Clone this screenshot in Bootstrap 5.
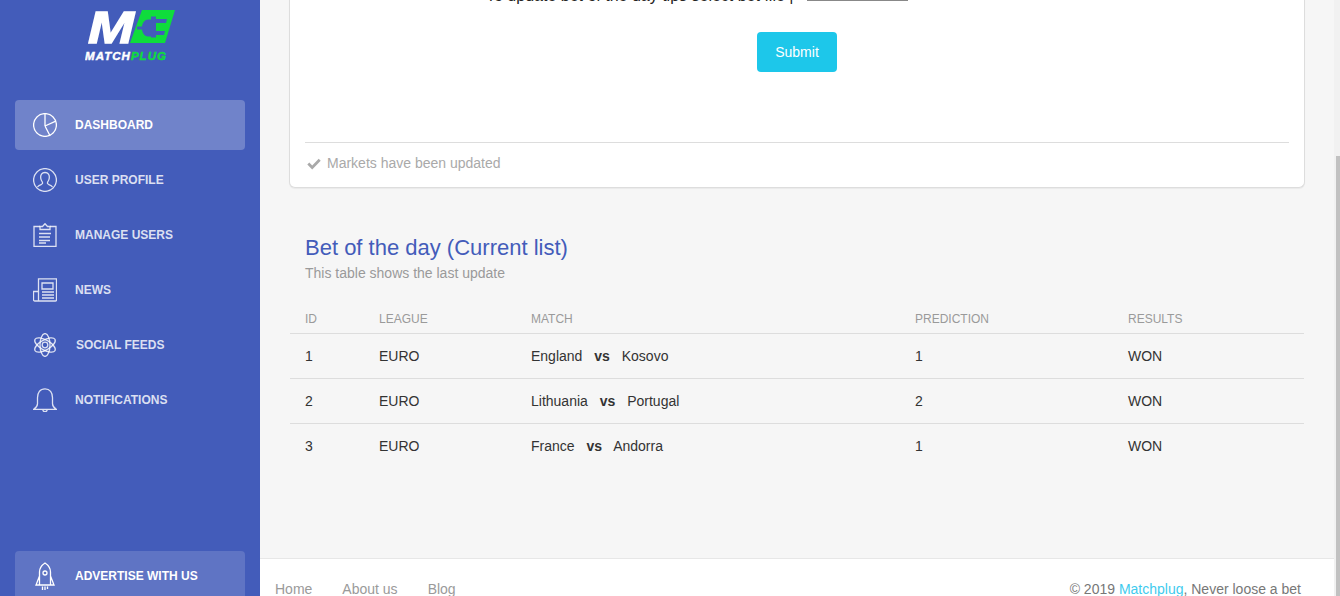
<!DOCTYPE html>
<html lang="en">
<head>
<meta charset="utf-8">
<title>Matchplug</title>
<link rel="stylesheet" href="https://cdn.jsdelivr.net/npm/bootstrap@5.3.0/dist/css/bootstrap.min.css">
<style>
html,body{height:100%;overflow:hidden}
body{font-family:"Liberation Sans",Arial,sans-serif;font-size:14px;background:#f6f6f6;color:#333}
.shell{height:596px;overflow:hidden}
.side{width:260px;flex:0 0 260px;background:#435cba;height:596px;overflow:hidden}
.brand{height:100px;padding-top:10px}
.brand svg{display:block;margin-left:85px}
.side-link{height:50px;margin:0 15px 5px;padding-left:18px;border-radius:4px;color:rgba(255,255,255,.82);font-size:12px;font-weight:700;text-transform:uppercase;text-decoration:none}
.side-link svg{width:24px;height:24px;flex:0 0 24px;margin-right:18px;fill:none;stroke:currentColor;stroke-width:1.3}
.side-link.on{background:rgba(255,255,255,.24);color:#fff}
.side-link.promo{background:rgba(255,255,255,.15);color:#fff;margin-bottom:-5px}
.side-link.promo svg{height:30px}
.side-link.nudge span{margin-left:1px}
.mainwrap{width:1074px;flex:0 0 1074px;height:596px;overflow:hidden}
.body-area{height:558px;overflow:hidden;padding:0 29px}
.formcard{height:197px;margin-top:-9px;margin-bottom:47px;background:#fff;border:1px solid #ddd;border-top:0;border-radius:0 0 6px 6px;padding:0 15px;box-shadow:0 1px 1px rgba(0,0,0,.05)}
.toprow{height:9px;line-height:0;padding-left:181px;color:#252422;white-space:nowrap;font-size:16px;align-items:flex-end}
.toprow span{position:relative;top:-4px}
.file-line{width:101px;height:1px;border-bottom:2px solid #888;margin-left:14px;margin-bottom:-1px}
.go-btn{width:80px;height:40px;margin-top:32px;padding:0;background:#1dc7ea;border:0;color:#fff;font-size:14px;border-radius:4px}
.sepline{margin:70px 0 0;border:0;border-top:1px solid #ddd;opacity:1}
.statusline{color:#a9a9a9;margin-top:12px;line-height:17px;padding-left:2px}
.statusline svg{width:14px;height:12px;margin-right:6px;fill:#a9a9a9}
.tblhead{padding:0 16px;margin-bottom:24px}
.tblhead h4{font-size:22px;font-weight:400;color:#435cba;line-height:25px;margin:0 0 5px}
.tblhead p{color:#9a9a9a;margin:0;line-height:16px}
.bets{width:1014px;margin:0 0 0 1px;--bs-table-bg:transparent;--bs-table-color:#333;table-layout:fixed}
.bets th{font-size:12px;font-weight:400;color:#9a9a9a;text-transform:uppercase;height:28px;padding:0 0 0 15px;border-bottom:1px solid #ddd;vertical-align:middle}
.bets td{height:45px;padding:1px 0 0 15px;border-bottom:1px solid #ddd;vertical-align:middle;font-size:14px;color:#333}
.bets tbody tr:last-child td{border-bottom:0}
.c1{width:74px}.c2{width:152px}.c3{width:384px}.c4{width:213px}
.foot{height:38px;background:#fff;border-top:1px solid #e7e7e7;padding:20px 33px 0 15px;line-height:20px;overflow:visible}
.foot a{color:#9a9a9a;text-decoration:none;margin-right:30px}
.foot .copy{color:#777}
.foot .copy a{color:#3fcbee;margin:0}
.sbar{width:6px;flex:0 0 6px;height:596px;background:#f1f1f1}
.sbar i{display:block;margin:156px 0 0 2px;width:4px;height:440px;background:#c1c1c1}
</style>
</head>
<body>
<div class="shell d-flex">
  <aside class="side d-flex flex-column">
    <div class="brand">
      <svg width="90" height="55" viewBox="0 0 90 55" role="img" aria-label="Matchplug logo">
        <text x="3" y="33" font-family="Liberation Sans" font-weight="700" font-style="italic" font-size="45" fill="#fff" stroke="#fff" stroke-width="1.400" textLength="46" lengthAdjust="spacingAndGlyphs">M</text>
        <polygon points="57,0 90,0 80,33 45,33" fill="#0fdc3c"/>
        <path d="M52 16.500h5c.5-4 3-7 6-7h3V6.500h5V9h11l-1 4H71v8h9l-1 4H71v2.500h-5V26.500h-3c-3 0-5.500-3-6-7h-5z" fill="#435cba"/>
        <text x="0" y="50" font-family="Liberation Sans" font-weight="700" font-style="italic" font-size="11.500" fill="#fff" stroke="#fff" stroke-width=".45" textLength="81">MATCH<tspan fill="#0fdc3c" stroke="#0fdc3c">PLUG</tspan></text>
      </svg>
    </div>
    <a class="side-link on d-flex align-items-center" href="#">
      <svg viewBox="0 0 24 24"><circle cx="12" cy="12" r="11.400"/><path d="M12 13V.8M12 13l10.800-4.800M12 13l5 9.800"/></svg><span>Dashboard</span></a>
    <a class="side-link d-flex align-items-center" href="#">
      <svg viewBox="0 0 24 24"><circle cx="12" cy="12" r="11.400"/><path d="M12 4.500c-3.200 0-4.700 2.500-4.300 5.500.2 2 1 3.300 1.800 4.300.4 1 0 1.700-1.200 2.200-1.700.7-3 1.200-3.800 2.500M12 4.500c3.200 0 4.700 2.500 4.300 5.500-.2 2-1 3.300-1.800 4.300-.4 1 0 1.700 1.200 2.200 1.700.7 3 1.200 3.800 2.500"/></svg><span>User Profile</span></a>
    <a class="side-link d-flex align-items-center" href="#">
      <svg viewBox="0 0 24 24"><path d="M7 3.500H1v20h22v-20h-6"/><path d="M7 6.500h10v-3h-2.500L12 .7 9.500 3.500H7zM6 10.500h12M6 14h11M6 17.500h11M6 20h7"/></svg><span>Manage Users</span></a>
    <a class="side-link d-flex align-items-center" href="#">
      <svg viewBox="0 0 24 24"><path d="M5.500 23V.8h18v21c0 .8-.4 1.200-1.200 1.200H1.800C1 23 .5 22.500.5 21.700V13.500h5"/><path d="M9 5h11v6H9zM9 14h12M9 17h12M9 20h12"/></svg><span>News</span></a>
    <a class="side-link nudge d-flex align-items-center" href="#">
      <svg viewBox="0 0 24 24"><circle cx="12" cy="12" r="2.800"/><ellipse cx="12" cy="12" rx="11.500" ry="5" transform="rotate(30 12 12)"/><ellipse cx="12" cy="12" rx="11.500" ry="5" transform="rotate(-30 12 12)"/><ellipse cx="12" cy="12" rx="5" ry="11.400"/></svg><span>Social Feeds</span></a>
    <a class="side-link d-flex align-items-center" href="#">
      <svg viewBox="0 0 24 24"><path d="M12 .8c-5 0-7.500 4-7.500 9v6c0 2.500-1.500 4-3.800 5.500h22.600c-2.300-1.500-3.800-3-3.800-5.500v-6c0-5-2.500-9-7.500-9zM9.800 21.300c0 3.200 4.400 3.200 4.400 0"/></svg><span>Notifications</span></a>
    <a class="side-link promo mt-auto d-flex align-items-center" href="#">
      <svg viewBox="0 0 24 30"><path d="M12 2c-3 2-5.500 5-5.500 9v13h11V11c0-4-2.500-7-5.500-9zM6.500 15L3 24h3.500M17.500 15l3.500 9h-3.500M9.500 25.500V29M12 25.500V29M14.500 25.500V28"/><circle cx="12" cy="12" r="2"/></svg><span>Advertise with us</span></a>
  </aside>
  <div class="mainwrap d-flex flex-column">
    <main class="body-area">
      <section class="formcard">
        <div class="toprow d-flex"><span>To update bet of the day tips select bet file |</span><div class="file-line"></div></div>
        <div class="text-center"><button class="btn go-btn" type="button">Submit</button></div>
        <hr class="sepline">
        <div class="statusline d-flex align-items-center">
          <svg viewBox="0 0 14 12"><path d="M5.200 11.500.3 6.600l2-2 2.900 2.900L11.700.7l2 2z"/></svg>Markets have been updated
        </div>
      </section>
      <div class="tblhead">
        <h4>Bet of the day (Current list)</h4>
        <p>This table shows the last update</p>
      </div>
      <table class="table bets">
        <thead><tr><th class="c1">ID</th><th class="c2">League</th><th class="c3">Match</th><th class="c4">Prediction</th><th>Results</th></tr></thead>
        <tbody>
          <tr><td>1</td><td>EURO</td><td>England <b class="mx-2">vs</b> Kosovo</td><td>1</td><td>WON</td></tr>
          <tr><td>2</td><td>EURO</td><td>Lithuania <b class="mx-2">vs</b> Portugal</td><td>2</td><td>WON</td></tr>
          <tr><td>3</td><td>EURO</td><td>France <b class="mx-2">vs</b> Andorra</td><td>1</td><td>WON</td></tr>
        </tbody>
      </table>
    </main>
    <footer class="foot d-flex justify-content-between">
      <nav><a href="#">Home</a><a href="#">About us</a><a href="#">Blog</a></nav>
      <div class="copy">© 2019 <a href="#">Matchplug</a>, Never loose a bet</div>
    </footer>
  </div>
  <div class="sbar"><i></i></div>
</div>
<script src="https://cdn.jsdelivr.net/npm/bootstrap@5.3.0/dist/js/bootstrap.bundle.min.js"></script>
</body>
</html>
